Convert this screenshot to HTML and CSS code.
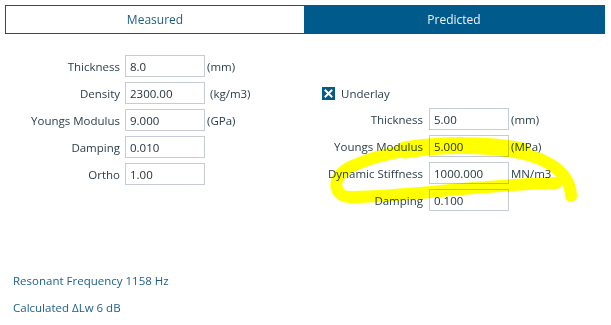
FILE: index.html
```html
<!DOCTYPE html>
<html lang="en">
<head>
    <meta charset="UTF-8">
    <meta name="viewport" content="width=device-width, initial-scale=1.0">
    <title>Floor Calculator</title>
    <link rel="stylesheet" href="styles.css">
</head>
<body>
    <div class="tabs">
        <div class="tab">Measured</div>
        <div class="tab active">Predicted</div>
    </div>

    <div class="form">
        <div class="panel left">
            <div class="fields">
                <label>Thickness</label>
                <input type="text" value="8.0">
                <span class="unit">(mm)</span>

                <label>Density</label>
                <input type="text" value="2300.00">
                <span class="unit wide">(kg/m3)</span>

                <label>Youngs Modulus</label>
                <input type="text" value="9.000">
                <span class="unit">(GPa)</span>

                <label>Damping</label>
                <input type="text" value="0.010">
                <span class="unit"></span>

                <label>Ortho</label>
                <input type="text" value="1.00">
                <span class="unit"></span>
            </div>
        </div>

        <div class="panel right">
            <div class="check-row">
                <span class="checkbox">
                    <svg width="13" height="13" viewBox="0 0 13 13">
                        <path d="M3.5 3.5 L9.5 9.5 M9.5 3.5 L3.5 9.5" stroke="#fff" stroke-width="2" stroke-linecap="square"/>
                    </svg>
                </span>
                <span>Underlay</span>
            </div>
            <div class="fields">
                <label>Thickness</label>
                <input type="text" value="5.00">
                <span class="unit">(mm)</span>

                <label>Youngs Modulus</label>
                <input type="text" value="5.000">
                <span class="unit">(MPa)</span>

                <label>Dynamic Stiffness</label>
                <input type="text" value="1000.000">
                <span class="unit">MN/m3</span>

                <label>Damping</label>
                <input type="text" value="0.100">
                <span class="unit"></span>
            </div>
        </div>
    </div>

    <div class="results">
        <div>Resonant Frequency 1158 Hz</div>
        <div>Calculated &Delta;Lw 6 dB</div>
    </div>

    <!-- highlighter mark drawn over the form -->
    <svg class="highlight" width="611" height="325" viewBox="0 0 611 325">
        <g fill="none" stroke="#ffff00" stroke-linecap="round" stroke-linejoin="round">
            <path d="M571 196 C570 170, 545 152, 480 147 C425 144, 380 153, 350 167 C330 177, 333 198, 352 197 C410 197, 470 185, 556 183" stroke-width="12"/>
            <path d="M405 150 C440 144, 490 144, 522 151" stroke-width="17"/>
        </g>
    </svg>
</body>
</html>
```

FILE: styles.css
```css
body {
    font-family: "Open Sans", "Noto Sans", sans-serif;
    font-size: 11.5px;
    color: #2a3e4a;
    background: #fff;
    margin: 0;
    width: 611px;
    height: 325px;
    overflow: hidden;
}

.tabs {
    display: flex;
    margin: 5px 6px 0 5px;
    height: 29px;
    border: 1px solid #005a8b;
    box-sizing: border-box;
}

.tab {
    flex: 0 0 298px;
    display: flex;
    align-items: center;
    justify-content: center;
    font-size: 12px;
    color: #1d5d87;
}

.tab.active {
    flex: 1;
    background-color: #005a8b;
    color: #eef4f8;
}

.form {
    display: flex;
    padding-top: 21px;
}

.panel.left {
    width: 305px;
}

.fields {
    display: grid;
    grid-template-columns: 120px 80px auto;
    column-gap: 5px;
    row-gap: 5px;
    align-items: center;
}

.fields label {
    text-align: right;
    white-space: nowrap;
}

.fields input {
    width: 80px;
    height: 22px;
    box-sizing: border-box;
    border: 1px solid #c6cbd7;
    padding: 0 4px;
    font-family: inherit;
    font-size: 11.5px;
    color: #1f2c35;
    background: #fff;
    margin: 0;
}

.unit {
    margin-left: -3px;
}

.unit.wide {
    margin-left: 0;
}

.panel.right {
    padding-top: 32px;
}

.check-row {
    display: flex;
    align-items: center;
    gap: 6px;
    height: 13px;
    margin-left: 17px;
    margin-bottom: 8px;
}

.checkbox {
    display: block;
    width: 13px;
    height: 13px;
    background-color: #005a8b;
}

.checkbox svg {
    display: block;
}

.panel.right .fields {
    grid-template-columns: 118px 80px auto;
    column-gap: 6px;
}

.panel.right .unit {
    margin-left: -4px;
}

.results {
    margin-top: 56px;
    padding-left: 13px;
    color: #1a5f8d;
}

.results div {
    height: 27px;
    line-height: 27px;
}

.highlight {
    position: absolute;
    left: 0;
    top: 0;
    pointer-events: none;
    mix-blend-mode: multiply;
}
```
